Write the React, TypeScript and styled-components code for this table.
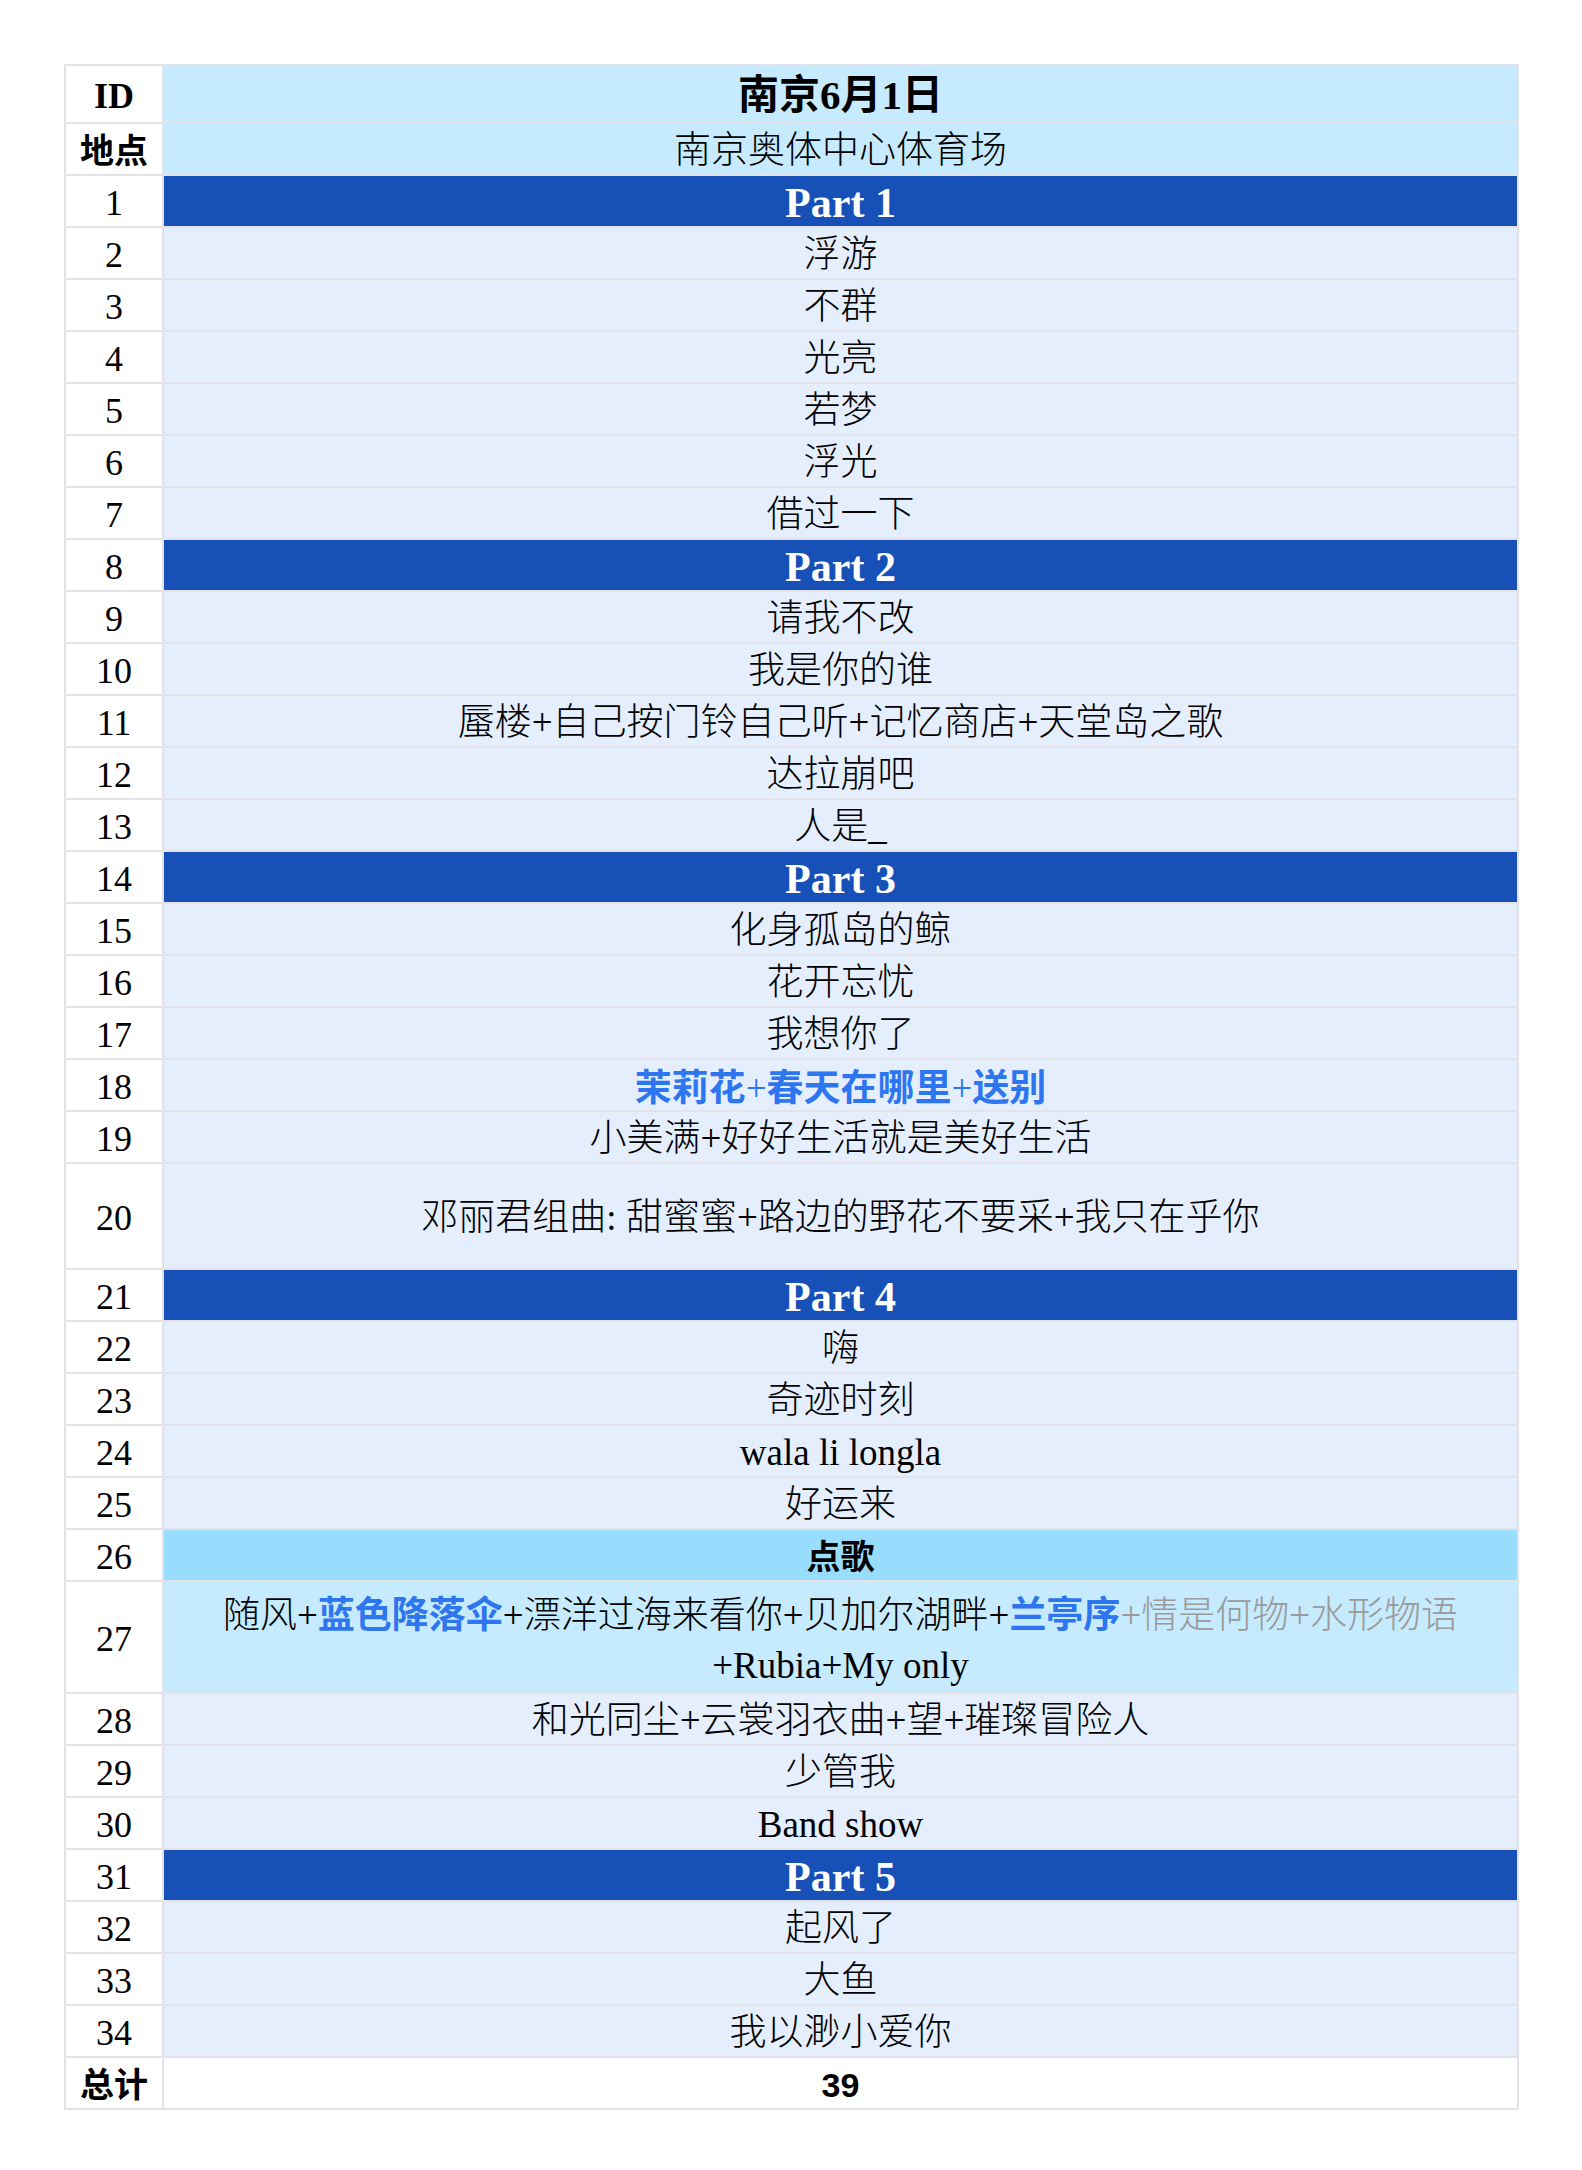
import React from "react";
import styled, { createGlobalStyle } from "styled-components";

const Global = createGlobalStyle`
  html, body { margin: 0; padding: 0; background: #ffffff; }
  body { font-family: "Liberation Serif", "Noto Sans CJK SC", serif; }
`;

const Page = styled.div`
  padding: 64px 0 0 64px;
  width: 1582px;
  box-sizing: border-box;
`;

const Table = styled.table`
  border-collapse: collapse;
  width: 1455px;
  table-layout: fixed;
  border: 2px solid #e2e2e8;
`;

const Row = styled.tr<{ $h?: number }>`
  height: ${(p) => p.$h ?? 52}px;
`;

const IdCell = styled.td<{ $bold?: boolean }>`
  padding: 3px 0 0;
  border: 2px solid #e2e2e8;
  background: #ffffff;
  text-align: center;
  vertical-align: middle;
  color: #000;
  font-family: "Liberation Serif", "Noto Sans CJK SC", serif;
  font-weight: ${(p) => (p.$bold ? 700 : 400)};
  font-size: 36px;
  line-height: 1;
`;

type Kind = "header" | "part" | "song" | "request" | "requestList" | "total";

const bgFor: Record<Kind, string> = {
  header: "#c6eafe",
  part: "#1750b6",
  song: "#e4eefd",
  request: "#98dcfe",
  requestList: "#c6eafe",
  total: "#ffffff",
};

const Cell = styled.td<{ $kind: Kind }>`
  padding: 4px 8px 0;
  border: 2px solid #e2e2e8;
  background: ${(p) => bgFor[p.$kind]};
  text-align: center;
  vertical-align: middle;
  color: ${(p) => (p.$kind === "part" ? "#ffffff" : "#000000")};
  font-family: "Liberation Serif", "Noto Sans CJK SC", serif;
  font-size: 37px;
  line-height: 1.05;
  font-weight: 300;
`;

const Title = styled.span`
  font-weight: 700;
  font-size: 41px;
  line-height: 1;
`;

const PartTitle = styled.span`
  font-weight: 700;
  font-size: 42px;
  line-height: 1;
  font-family: "Liberation Serif", serif;
`;

const SansBold = styled.span`
  font-family: "Liberation Sans", "Noto Sans CJK SC", sans-serif;
  font-weight: 700;
  font-size: 34px;
  line-height: 1;
`;

const Blue = styled.span`
  color: #2e76ef;
`;

const BlueBold = styled.span`
  color: #2e76ef;
  font-family: "Noto Sans CJK SC", sans-serif;
  font-weight: 700;
`;

const Gray = styled.span`
  color: #9a9a9a;
`;

const Lines = styled.div`
  line-height: 50px;
`;

type Item =
  | { id: number; kind: "part"; text: string }
  | { id: number; kind: "song"; text: React.ReactNode; h?: number }
  | { id: number; kind: "request"; text: string }
  | { id: number; kind: "requestList"; text: React.ReactNode; h?: number };

const items: Item[] = [
  { id: 1, kind: "part", text: "Part 1" },
  { id: 2, kind: "song", text: "浮游" },
  { id: 3, kind: "song", text: "不群" },
  { id: 4, kind: "song", text: "光亮" },
  { id: 5, kind: "song", text: "若梦" },
  { id: 6, kind: "song", text: "浮光" },
  { id: 7, kind: "song", text: "借过一下" },
  { id: 8, kind: "part", text: "Part 2" },
  { id: 9, kind: "song", text: "请我不改" },
  { id: 10, kind: "song", text: "我是你的谁" },
  { id: 11, kind: "song", text: "蜃楼+自己按门铃自己听+记忆商店+天堂岛之歌" },
  { id: 12, kind: "song", text: "达拉崩吧" },
  { id: 13, kind: "song", text: "人是_" },
  { id: 14, kind: "part", text: "Part 3" },
  { id: 15, kind: "song", text: "化身孤岛的鲸" },
  { id: 16, kind: "song", text: "花开忘忧" },
  { id: 17, kind: "song", text: "我想你了" },
  {
    id: 18,
    kind: "song",
    text: (
      <>
        <BlueBold>茉莉花</BlueBold>
        <Blue>+</Blue>
        <BlueBold>春天在哪里</BlueBold>
        <Blue>+</Blue>
        <BlueBold>送别</BlueBold>
      </>
    ),
  },
  { id: 19, kind: "song", text: "小美满+好好生活就是美好生活" },
  { id: 20, kind: "song", text: "邓丽君组曲: 甜蜜蜜+路边的野花不要采+我只在乎你", h: 106 },
  { id: 21, kind: "part", text: "Part 4" },
  { id: 22, kind: "song", text: "嗨" },
  { id: 23, kind: "song", text: "奇迹时刻" },
  { id: 24, kind: "song", text: "wala li longla" },
  { id: 25, kind: "song", text: "好运来" },
  { id: 26, kind: "request", text: "点歌" },
  {
    id: 27,
    kind: "requestList",
    h: 112,
    text: (
      <Lines>
        随风+<BlueBold>蓝色降落伞</BlueBold>+漂洋过海来看你+贝加尔湖畔+
        <BlueBold>兰亭序</BlueBold>
        <Gray>+情是何物+水形物语</Gray>
        <br />
        +Rubia+My only
      </Lines>
    ),
  },
  { id: 28, kind: "song", text: "和光同尘+云裳羽衣曲+望+璀璨冒险人" },
  { id: 29, kind: "song", text: "少管我" },
  { id: 30, kind: "song", text: "Band show" },
  { id: 31, kind: "part", text: "Part 5" },
  { id: 32, kind: "song", text: "起风了" },
  { id: 33, kind: "song", text: "大鱼" },
  { id: 34, kind: "song", text: "我以渺小爱你" },
];

export default function App() {
  return (
    <Page>
      <Global />
      <Table>
        <colgroup>
          <col style={{ width: 98 }} />
          <col />
        </colgroup>
        <tbody>
          <Row $h={58}>
            <IdCell $bold>ID</IdCell>
            <Cell $kind="header">
              <Title>南京6月1日</Title>
            </Cell>
          </Row>
          <Row>
            <IdCell $bold>
              <SansBold>地点</SansBold>
            </IdCell>
            <Cell $kind="header">南京奥体中心体育场</Cell>
          </Row>
          {items.map((it) => (
            <Row key={it.id} $h={"h" in it ? it.h : undefined}>
              <IdCell>{it.id}</IdCell>
              <Cell $kind={it.kind}>
                {it.kind === "part" ? (
                  <PartTitle>{it.text}</PartTitle>
                ) : it.kind === "request" ? (
                  <SansBold>{it.text}</SansBold>
                ) : (
                  it.text
                )}
              </Cell>
            </Row>
          ))}
          <Row>
            <IdCell $bold>
              <SansBold>总计</SansBold>
            </IdCell>
            <Cell $kind="total">
              <SansBold>39</SansBold>
            </Cell>
          </Row>
        </tbody>
      </Table>
    </Page>
  );
}
